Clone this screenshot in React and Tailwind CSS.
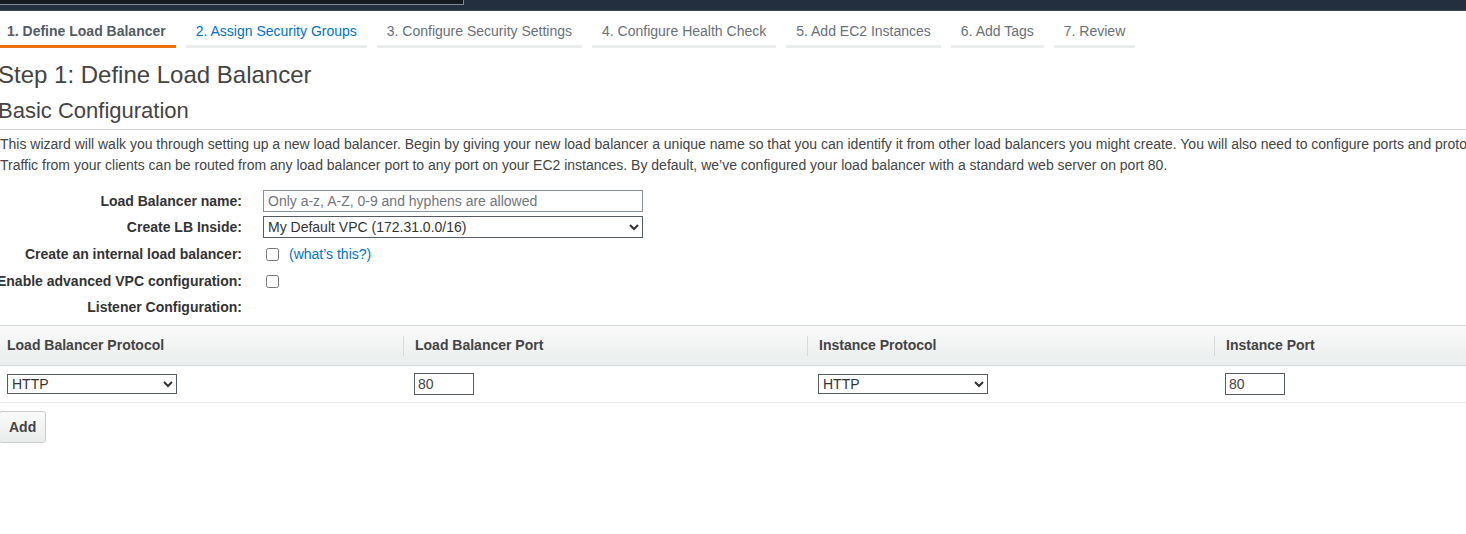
const tabs = [
  { label: '1. Define Load Balancer', state: 'active' },
  { label: '2. Assign Security Groups', state: 'link' },
  { label: '3. Configure Security Settings', state: 'idle' },
  { label: '4. Configure Health Check', state: 'idle' },
  { label: '5. Add EC2 Instances', state: 'idle' },
  { label: '6. Add Tags', state: 'idle' },
  { label: '7. Review', state: 'idle' },
]

function Tab({ label, state }) {
  const cls =
    state === 'active'
      ? 'border-[#ec7211] text-[#545b64] font-bold'
      : state === 'link'
        ? 'border-[#eaeded] text-[#0073bb]'
        : 'border-[#eaeded] text-[#687078]'
  return (
    <div className={`px-[10px] pt-[10px] pb-[3px] border-b-[3px] text-[14px] leading-[21px] whitespace-nowrap ${cls}`}>
      {label}
    </div>
  )
}

function FormRow({ label, children, h = 'h-[26px]' }) {
  return (
    <div className={`flex items-center ${h}`}>
      <div className="w-[242px] shrink-0 text-right font-bold text-[#333] whitespace-nowrap flex justify-end">
        <span>{label}</span>
      </div>
      <div className="ml-[21px] flex items-center">{children}</div>
    </div>
  )
}

function HeadCell({ children, first, w }) {
  return (
    <div className={`${w} shrink-0 flex items-center`}>
      {!first && <div className="w-px h-[20px] bg-[#d5dbdb]" />}
      <div className={`${first ? 'pl-[7px]' : 'pl-[11px]'} font-bold text-[#444]`}>{children}</div>
    </div>
  )
}

export default function App() {
  return (
    <div className="w-[1466px] h-[534px] overflow-hidden bg-white text-[14px] leading-[21px] text-[#444]" style={{ fontFamily: '"Liberation Sans", Arial, sans-serif' }}>
      <div className="h-[11px] bg-[#232f3e] border-b border-[#3b4757]">
        <div className="w-[464px] h-[5px] bg-[#16191f] border-r border-b border-[#7d8998]" />
      </div>

      <div className="flex gap-[10px] -ml-[3px]">
        {tabs.map((t) => (
          <Tab key={t.label} {...t} />
        ))}
      </div>

      <div className="w-[1640px]">
        <h1 className="mt-[13px] -ml-[2px] text-[24px] leading-[28px] text-[#444]">Step 1: Define Load Balancer</h1>
        <h2 className="mt-[9px] -ml-[2px] text-[22px] leading-[26px] text-[#444]">Basic Configuration</h2>
        <div className="mt-[5px] h-px bg-[#ccc]" />
        <p className="mt-[4px] text-[#444] whitespace-nowrap">
          This wizard will walk you through setting up a new load balancer. Begin by giving your new load balancer a unique name so that you can identify it from other load balancers you might create. You will also need to configure ports and protocols for your load balancer.
          <br />
          Traffic from your clients can be routed from any load balancer port to any port on your EC2 instances. By default, we’ve configured your load balancer with a standard web server on port 80.
        </p>

        <div className="mt-[12px]">
          <FormRow label="Load Balancer name:">
            <input
              className="w-[380px] h-[22px] border border-[#879196] px-[4px] text-[14px] text-[#444] placeholder:text-[#6f767d]"
              placeholder="Only a-z, A-Z, 0-9 and hyphens are allowed"
            />
          </FormRow>
          <FormRow label="Create LB Inside:">
            <select className="w-[380px] h-[22px] border border-[#545b64] text-[14px] text-[#333] bg-white">
              <option>My Default VPC (172.31.0.0/16)</option>
            </select>
          </FormRow>
          <FormRow label="Create an internal load balancer:" h="h-[28px]">
            <input type="checkbox" className="ml-[3px] w-[13px] h-[13px]" />
            <a className="ml-[10px] text-[#0073bb]">(what’s this?)</a>
          </FormRow>
          <FormRow label="Enable advanced VPC configuration:" h="h-[26px]">
            <input type="checkbox" className="ml-[3px] w-[13px] h-[13px]" />
          </FormRow>
          <FormRow label="Listener Configuration:" h="h-[26px]" />
        </div>

        <div className="mt-[5px]">
          <div className="flex h-[41px] border-t border-b border-[#d5dbdb] bg-gradient-to-b from-[#fafafa] to-[#eaeded]">
            <HeadCell first w="w-[403px]">Load Balancer Protocol</HeadCell>
            <HeadCell w="w-[404px]">Load Balancer Port</HeadCell>
            <HeadCell w="w-[407px]">Instance Protocol</HeadCell>
            <HeadCell w="w-[420px]">Instance Port</HeadCell>
          </div>
          <div className="flex h-[37px] items-center border-b border-[#eaeded]">
            <div className="w-[403px] shrink-0 pl-[7px]">
              <select className="w-[170px] h-[20px] border border-[#545b64] text-[14px] text-[#333] bg-white">
                <option>HTTP</option>
              </select>
            </div>
            <div className="w-[404px] shrink-0 pl-[11px]">
              <input className="w-[60px] h-[22px] border border-[#545b64] px-[3px] text-[14px] text-[#444]" defaultValue="80" />
            </div>
            <div className="w-[407px] shrink-0 pl-[11px]">
              <select className="w-[170px] h-[20px] border border-[#545b64] text-[14px] text-[#333] bg-white">
                <option>HTTP</option>
              </select>
            </div>
            <div className="w-[420px] shrink-0 pl-[11px]">
              <input className="w-[60px] h-[22px] border border-[#545b64] px-[3px] text-[14px] text-[#444]" defaultValue="80" />
            </div>
          </div>
        </div>

        <button className="mt-[8px] -ml-px h-[32px] px-[9px] border border-[#ccc] rounded-[3px] bg-gradient-to-b from-[#fafafa] to-[#eaeded] font-bold text-[#444]">
          Add
        </button>
      </div>
    </div>
  )
}
